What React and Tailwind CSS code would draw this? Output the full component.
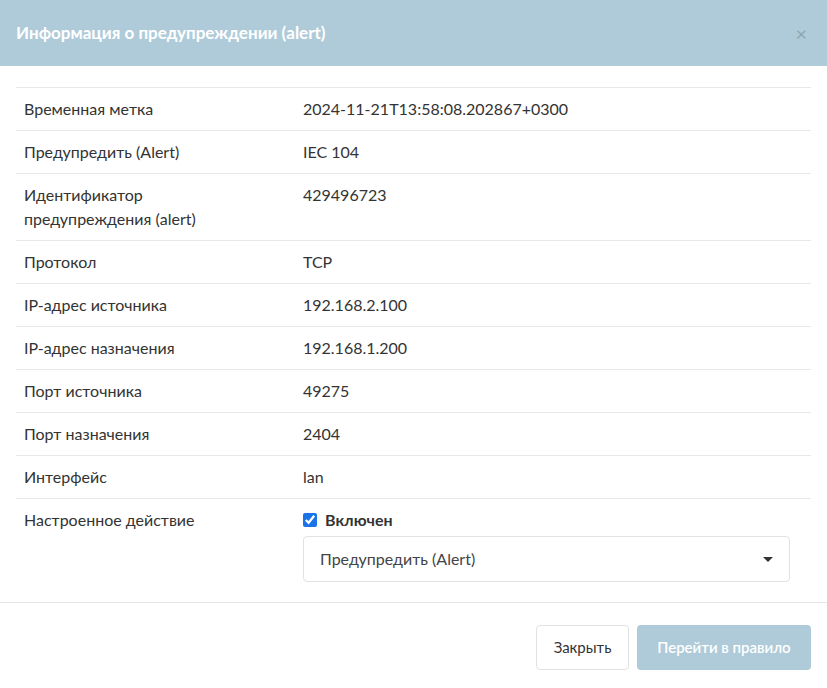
export default function App() {
  const rows = [
    ["Временная метка", "2024-11-21T13:58:08.202867+0300"],
    ["Предупредить (Alert)", "IEC 104"],
    ["Идентификатор предупреждения (alert)", "429496723"],
    ["Протокол", "TCP"],
    ["IP-адрес источника", "192.168.2.100"],
    ["IP-адрес назначения", "192.168.1.200"],
    ["Порт источника", "49275"],
    ["Порт назначения", "2404"],
    ["Интерфейс", "lan"],
  ];
  return (
    <div className="w-[827px] h-[688px] bg-white text-[16px] text-[#333]" style={{ fontFamily: "Lato, 'Noto Sans', sans-serif" }}>
      <div className="h-[66px] bg-[#afcbd9] flex items-center justify-between px-4">
        <div className="text-white font-bold text-[17px]">Информация о предупреждении (alert)</div>
        <div className="text-[#8fa6b2] text-[20px] mr-1">×</div>
      </div>
      <div className="px-4 pt-[21px] h-[537px] border-b border-[#e5e5e5]">
        <div className="border-t border-[#e8e8e8]">
          {rows.map(([k, v]) => (
            <div key={k} className="flex border-b border-[#e8e8e8] py-[9px] leading-[24px]">
              <div className="w-[279px] pl-2 pr-[60px]">{k}</div>
              <div className="pl-2">{v}</div>
            </div>
          ))}
          <div className="flex py-[9px] leading-[24px]">
            <div className="w-[279px] pl-2">Настроенное действие</div>
            <div className="pl-2 flex-1 pr-[21px]">
              <label className="flex items-center gap-2 font-bold text-[16px]">
                <input type="checkbox" defaultChecked className="w-[14px] h-[14px] accent-[#1a73e8]" />
                Включен
              </label>
              <div className="mt-[4px] h-[46px] border border-[#e2e2e2] rounded flex items-center justify-between px-4 text-[#444]">
                <span>Предупредить (Alert)</span>
                <span className="w-0 h-0 border-l-[5px] border-r-[5px] border-t-[5px] border-l-transparent border-r-transparent border-t-[#333]"></span>
              </div>
            </div>
          </div>
        </div>
      </div>
      <div className="flex justify-end gap-2 px-4 pt-[22px]">
        <button className="h-[45px] w-[93px] border border-[#e2e2e2] rounded text-[15px] text-[#333] bg-white">Закрыть</button>
        <button className="h-[45px] w-[174px] rounded text-[15px] text-white bg-[#afcbd9] font-semibold">Перейти в правило</button>
      </div>
    </div>
  );
}
